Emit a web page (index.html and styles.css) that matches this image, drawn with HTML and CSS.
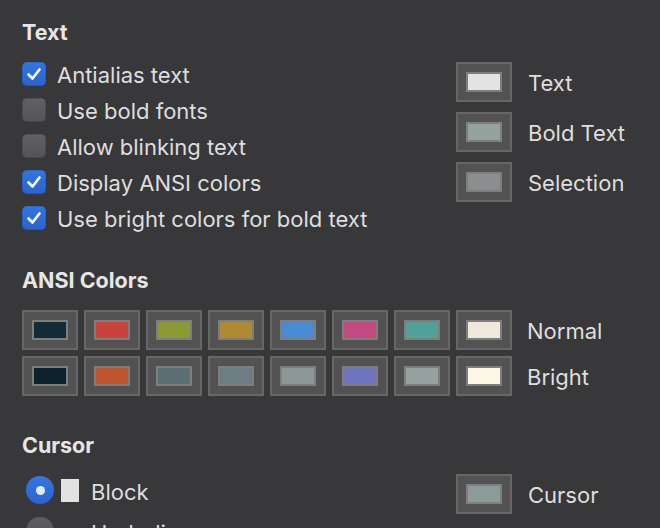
FILE: index.html
```html
<!DOCTYPE html>
<html>
<head>
<meta charset="utf-8">
<link rel="stylesheet" href="styles.css">
</head>
<body>
<div class="pane">
  <section class="sec">
    <h2 class="head">Text</h2>
    <div class="cols">
      <div class="left">
        <label class="row"><span class="cb on"><svg viewBox="0 0 24 24"><path d="M6.5 12.5 L10.5 16.5 L17.5 7.5" fill="none" stroke="#fff" stroke-width="2.6" stroke-linecap="round" stroke-linejoin="round"/></svg></span><span class="lbl">Antialias text</span></label>
        <label class="row"><span class="cb"></span><span class="lbl">Use bold fonts</span></label>
        <label class="row"><span class="cb"></span><span class="lbl">Allow blinking text</span></label>
        <label class="row"><span class="cb on"><svg viewBox="0 0 24 24"><path d="M6.5 12.5 L10.5 16.5 L17.5 7.5" fill="none" stroke="#fff" stroke-width="2.6" stroke-linecap="round" stroke-linejoin="round"/></svg></span><span class="lbl">Display ANSI colors</span></label>
        <label class="row"><span class="cb on"><svg viewBox="0 0 24 24"><path d="M6.5 12.5 L10.5 16.5 L17.5 7.5" fill="none" stroke="#fff" stroke-width="2.6" stroke-linecap="round" stroke-linejoin="round"/></svg></span><span class="lbl">Use bright colors for bold text</span></label>
      </div>
      <div class="right">
        <div class="wrow"><span class="well"><span class="sw" style="background:#e4e2e3"></span></span><span class="lbl">Text</span></div>
        <div class="wrow"><span class="well"><span class="sw" style="background:#95a19d"></span></span><span class="lbl">Bold Text</span></div>
        <div class="wrow"><span class="well"><span class="sw" style="background:#8a8e8f"></span></span><span class="lbl">Selection</span></div>
      </div>
    </div>
  </section>

  <section class="sec ansi">
    <h2 class="head">ANSI Colors</h2>
    <div class="grid">
      <span class="well"><span class="sw" style="background:#112c37"></span></span>
      <span class="well"><span class="sw" style="background:#c9423d"></span></span>
      <span class="well"><span class="sw" style="background:#8a9935"></span></span>
      <span class="well"><span class="sw" style="background:#b08a32"></span></span>
      <span class="well"><span class="sw" style="background:#4a8cd3"></span></span>
      <span class="well"><span class="sw" style="background:#c24a80"></span></span>
      <span class="well"><span class="sw" style="background:#52a199"></span></span>
      <span class="well"><span class="sw" style="background:#eee9da"></span></span>
      <span class="glbl">Normal</span>
      <span class="well"><span class="sw" style="background:#0c232b"></span></span>
      <span class="well"><span class="sw" style="background:#bf5530"></span></span>
      <span class="well"><span class="sw" style="background:#5e6e75"></span></span>
      <span class="well"><span class="sw" style="background:#6e7c83"></span></span>
      <span class="well"><span class="sw" style="background:#8c9898"></span></span>
      <span class="well"><span class="sw" style="background:#6f73c0"></span></span>
      <span class="well"><span class="sw" style="background:#96a2a0"></span></span>
      <span class="well"><span class="sw" style="background:#fdf7e6"></span></span>
      <span class="glbl">Bright</span>
    </div>
  </section>

  <section class="sec cursor">
    <h2 class="head">Cursor</h2>
    <div class="cols">
      <div class="left">
        <label class="rrow"><span class="radio on"><span class="dot"></span></span><span class="glyph block"></span><span class="lbl">Block</span></label>
        <label class="rrow"><span class="radio"></span><span class="glyph"></span><span class="lbl">Underline</span></label>
      </div>
      <div class="right">
        <div class="wrow cw"><span class="well"><span class="sw" style="background:#8b9b9a"></span></span><span class="lbl">Cursor</span></div>
      </div>
    </div>
  </section>
</div>
</body>
</html>
```

FILE: styles.css
```css
html, body {
  margin: 0;
  padding: 0;
  background: #38373a;
  height: 100%;
  overflow: hidden;
}
.pane {
  padding: 20px 0 0 22px;
  font-family: Inter, "Noto Sans", sans-serif;
  color: #dedede;
}
.head {
  margin: 0;
  font-size: 21.5px;
  line-height: 24px;
  font-weight: 700;
  color: #e6e6e6;
}
.sec .cols {
  display: grid;
  grid-template-columns: 434px auto;
  margin-top: 18px;
}
.left {
  display: flex;
  flex-direction: column;
  gap: 12px;
}
.row {
  display: flex;
  align-items: center;
  height: 24px;
  gap: 11px;
}
.lbl {
  font-size: 22px;
  line-height: 24px;
  color: #dedede;
  padding-top: 1px;
}
.cb {
  width: 24px;
  height: 24px;
  border-radius: 5px;
  box-sizing: border-box;
  background: linear-gradient(#616163, #545456);
  box-shadow: inset 0 0 0 1px rgba(0,0,0,0.15);
  display: block;
  flex: none;
}
.cb.on {
  background: linear-gradient(#3276e0, #2963cf);
  box-shadow: inset 0 0 0 1px rgba(0,0,0,0.1);
}
.cb svg {
  display: block;
  width: 24px;
  height: 24px;
}
.right {
  display: flex;
  flex-direction: column;
  gap: 10px;
}
.wrow {
  display: flex;
  align-items: center;
  gap: 16px;
  height: 40px;
}
.well {
  width: 56px;
  height: 40px;
  box-sizing: border-box;
  background: #525252;
  border: 2px solid #666666;
  display: flex;
  align-items: center;
  justify-content: center;
  flex: none;
}
.sw {
  width: 36px;
  height: 20px;
  box-sizing: border-box;
  border: 2px solid #7e7e7e;
  display: block;
}
.ansi {
  margin-top: 38px;
}
.grid {
  margin-top: 18px;
  display: grid;
  grid-template-columns: repeat(8, 56px) auto;
  grid-auto-rows: 40px;
  gap: 6px;
}
.glbl {
  font-size: 22px;
  line-height: 40px;
  height: 40px;
  padding-top: 1px;
  box-sizing: border-box;
  margin-left: 9px;
  color: #dedede;
}
.cursor {
  margin-top: 37px;
}
.cursor .cols {
  margin-top: 17px;
}
.cursor .left {
  gap: 13px;
  padding-top: 2px;
}
.rrow {
  display: flex;
  align-items: center;
  height: 28px;
  gap: 0;
}
.radio {
  width: 28px;
  height: 28px;
  border-radius: 50%;
  margin-left: 4px;
  background: linear-gradient(#5d5d5f, #545456);
  display: flex;
  align-items: center;
  justify-content: center;
  flex: none;
}
.radio.on {
  background: linear-gradient(#3377e1, #2a64cf);
}
.dot {
  width: 9px;
  height: 9px;
  border-radius: 50%;
  background: #e2ebf9;
}
.glyph {
  width: 18px;
  height: 23px;
  margin-left: 7px;
  margin-right: 12px;
  flex: none;
}
.glyph.block {
  background: #e2e2e2;
}
.rrow .lbl {
  padding-top: 3px;
}
```
